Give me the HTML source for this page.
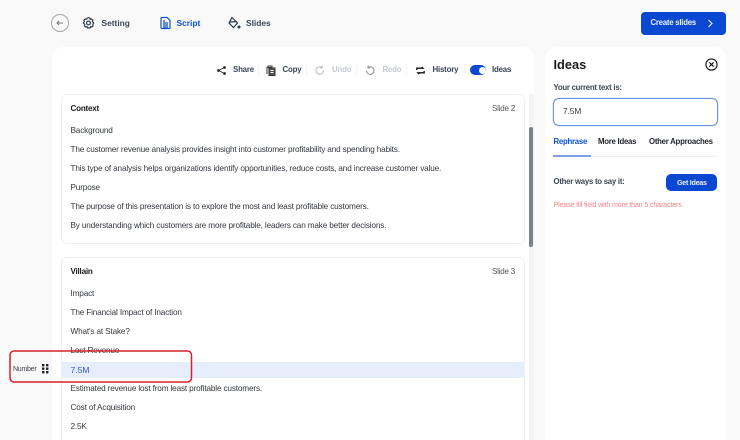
<!DOCTYPE html>
<html>
<head>
<meta charset="utf-8">
<style>
html,body{margin:0;padding:0;width:740px;height:440px;overflow:hidden}
body{position:relative;background:#f9f9fa;font-family:"Liberation Sans",sans-serif;color:#2f3640}
.a{position:absolute;white-space:nowrap;line-height:12px}
svg{position:absolute;overflow:visible}
.panel{position:absolute;background:#fff;border-radius:12px 12px 0 0}
.card{position:absolute;left:61px;width:462px;background:#fff;border:1px solid #f0f0f4;border-radius:6px;box-sizing:content-box}
.t{font-size:8.2px;letter-spacing:-.15px;color:#33373e}
.h{font-size:8.1px;letter-spacing:-.23px;font-weight:bold;color:#1a1a1a}
.s{font-size:8px;letter-spacing:-.2px;color:#555}
.tb{font-size:7.9px;letter-spacing:-.2px;font-weight:bold;color:#39465a}
.g{color:#c5c9d0}
.nav{font-size:8.4px;font-weight:bold;color:#3a4654}
.m{font-size:7.8px;letter-spacing:-.25px;font-weight:bold}
.d{position:absolute;top:64px;width:1px;height:12px;background:#f5f5f7}
</style>
</head>
<body>

<!-- top nav -->
<svg style="left:51px;top:14px" width="18" height="18" viewBox="0 0 18 18" fill="none"><circle cx="9" cy="9" r="8.500" stroke="#a0a3a8" stroke-width="1"/><path d="M12 9H6M8 7L6 9l2 2" stroke="#777" stroke-width="1"/></svg>
<svg style="left:82px;top:16px" width="13" height="14" viewBox="0 0 24 24" fill="none" stroke="#2f3b4a" stroke-width="2.200"><path d="M12 2l2.500 1 .8 2.300 2.400-.6 2.300 2.200-.7 2.500L21.500 12l-1.700 2.600.7 2.500-2.300 2.200-2.400-.6-.8 2.300h-5l-.8-2.300-2.400.6-2.300-2.200.7-2.500L2.500 12l1.700-2.600-.7-2.500 2.300-2.200 2.400.6L9.500 3z"/><circle cx="12" cy="12" r="3.500"/></svg>
<div class="a nav" style="left:101.500px;top:17px">Setting</div>
<svg style="left:160px;top:17px" width="11" height="12" viewBox="0 0 11 12" fill="none" stroke="#0b4fd6" stroke-width="1.200"><path d="M1 1.500a1 1 0 0 1 1-1h5l3 3v7a1 1 0 0 1-1 1H2a1 1 0 0 1-1-1z"/><path d="M3 6h5M3 8h5M3 10h5M3 4h2"/></svg>
<div class="a nav" style="left:176.500px;top:17px;color:#0b4fd6">Script</div>
<svg style="left:228px;top:16px" width="13" height="14" viewBox="0 0 13 14" fill="none" stroke="#2f3b4a" stroke-width="1.200"><path d="M4 1.500l5.500 5.500-4 4.500L1 7z"/><path d="M2 6l7-.5"/><circle cx="11" cy="11" r="1.500" fill="#2f3b4a" stroke="none"/></svg>
<div class="a nav" style="left:246px;top:17px">Slides</div>

<!-- create button -->
<div style="position:absolute;left:641px;top:12px;width:85px;height:23px;background:#0b48d2;border-radius:4px"></div>
<div class="a" style="left:650.500px;top:17px;font-size:7.800px;letter-spacing:-.24px;font-weight:bold;color:#e9f0ff">Create slides</div>
<svg style="left:707px;top:19px" width="7" height="9" viewBox="0 0 7 9" fill="none" stroke="#fff" stroke-width="1"><path d="M1.500 1l3.500 3.500L1.500 8"/></svg>

<!-- main panel -->
<div class="panel" style="left:52px;top:47px;width:482px;height:393px"></div>

<!-- toolbar -->
<svg style="left:217px;top:66px" width="9" height="9" viewBox="0 0 9 9" fill="#222" stroke="#222" stroke-width=".8"><path d="M7.500 1.500L1.500 4.500l6 3" fill="none"/><circle cx="1.500" cy="4.500" r="1"/><circle cx="7.500" cy="1.500" r="1"/><circle cx="7.500" cy="7.500" r="1"/></svg>
<div class="a tb" style="left:233px;top:64px">Share</div>
<svg style="left:266px;top:65px" width="10" height="11" viewBox="0 0 10 11" fill="none" stroke="#333" stroke-width="1"><path d="M1 2v7M2 1h4v1.500H2z"/><rect x="3" y="3" width="6" height="7.500" fill="#555"/><path d="M4.500 5.500h3M4.500 7.500h3" stroke="#fff"/></svg>
<div class="a tb" style="left:282.500px;top:64px">Copy</div>
<svg style="left:315px;top:65px" width="10" height="11" viewBox="0 0 10 11" fill="none" stroke="#b9bdc4" stroke-width="1"><path d="M8.500 5.500a3.800 3.800 0 1 1-1.500-3M7 .5v2.500H4.800"/></svg>
<div class="a tb g" style="left:332px;top:64px">Undo</div>
<svg style="left:365px;top:65px" width="10" height="11" viewBox="0 0 10 11" fill="none" stroke="#8f949b" stroke-width="1"><path d="M1.500 5.500a3.800 3.800 0 1 0 1.500-3M3 .5v2.500h2.200"/></svg>
<div class="a tb g" style="left:382.500px;top:64px">Redo</div>
<svg style="left:416px;top:66px" width="9" height="9" viewBox="0 0 9 9" fill="none" stroke="#111" stroke-width="1.300"><path d="M.8 4V2.200H7L5.800 1M8.200 5v1.800H2L3.200 8"/></svg>
<div class="a tb" style="left:432.500px;top:64px">History</div>
<div style="position:absolute;left:470px;top:65px;width:16px;height:10px;background:#0b48d2;border-radius:5px"></div>
<div style="position:absolute;left:478.500px;top:66.500px;width:7px;height:7px;background:#fff;border-radius:50%"></div>
<div class="a tb" style="left:492px;top:64px">Ideas</div>
<div class="d" style="left:258px"></div>
<div class="d" style="left:306px"></div>
<div class="d" style="left:356px"></div>
<div class="d" style="left:406px"></div>
<div class="d" style="left:464px"></div>

<!-- scrollbar -->
<div style="position:absolute;left:529px;top:94px;width:5px;height:346px;background:#f3f3f4"></div>
<div style="position:absolute;left:529px;top:127px;width:4px;height:120px;background:#7c8289;border-radius:2px"></div>

<!-- card 1 -->
<div class="card" style="top:94px;height:148px"></div>
<div class="a h" style="left:70.500px;top:103px">Context</div>
<div class="a s" style="right:225px;top:103px">Slide 2</div>
<div class="a t" style="left:70.500px;top:125px">Background</div>
<div class="a t" style="left:70.500px;top:144px">The customer revenue analysis provides insight into customer profitability and spending habits.</div>
<div class="a t" style="left:70.500px;top:163px">This type of analysis helps organizations identify opportunities, reduce costs, and increase customer value.</div>
<div class="a t" style="left:70.500px;top:182px">Purpose</div>
<div class="a t" style="left:70.500px;top:201px">The purpose of this presentation is to explore the most and least profitable customers.</div>
<div class="a t" style="left:70.500px;top:220px">By understanding which customers are more profitable, leaders can make better decisions.</div>

<!-- card 2 -->
<div class="card" style="top:257px;height:200px"></div>
<div class="a h" style="left:70.500px;top:266px">Villain</div>
<div class="a s" style="right:225px;top:266px">Slide 3</div>
<div class="a t" style="left:70.500px;top:288px">Impact</div>
<div class="a t" style="left:70.500px;top:307px">The Financial Impact of Inaction</div>
<div class="a t" style="left:70.500px;top:326px">What's at Stake?</div>
<div class="a t" style="left:70.500px;top:345px">Lost Revenue</div>
<div style="position:absolute;left:62px;top:362px;width:462px;height:16px;background:#e6edfb"></div>
<div class="a t" style="left:70.500px;top:364px;color:#2f55c8;font-size:8.500px;letter-spacing:0">7.5M</div>
<div class="a t" style="left:70.500px;top:383px">Estimated revenue lost from least profitable customers.</div>
<div class="a t" style="left:70.500px;top:402px">Cost of Acquisition</div>
<div class="a t" style="left:70.500px;top:421px">2.5K</div>

<!-- number handle and red box -->
<div class="a" style="left:13px;top:364px;font-size:7px;letter-spacing:-.25px;color:#3b3b45">Number</div>
<svg style="left:42px;top:364px" width="6.500" height="10" viewBox="0 0 6.500 10" fill="#222"><rect x="0" y="0" width="2.400" height="2.400"/><rect x="4" y="0" width="2.400" height="2.400"/><rect x="0" y="3.500" width="2.400" height="2.400"/><rect x="4" y="3.500" width="2.400" height="2.400"/><rect x="0" y="7" width="2.400" height="2.400"/><rect x="4" y="7" width="2.400" height="2.400"/></svg>
<svg style="left:0;top:0" width="740" height="440" fill="none"><rect x="10" y="351" width="181.500" height="31" rx="4" stroke="#d5202c" stroke-width="1.500"/></svg>

<!-- ideas panel -->
<div class="panel" style="left:545px;top:47px;width:181px;height:393px"></div>
<div class="a" style="left:553.500px;top:57px;font-size:12.800px;line-height:15px;font-weight:bold;color:#1b1b1f">Ideas</div>
<svg style="left:704.500px;top:58px" width="13" height="13" viewBox="0 0 13 13" fill="none" stroke="#111" stroke-width="1.100"><circle cx="6.500" cy="6.500" r="5.600"/><path d="M4.300 4.300l4.400 4.400M8.700 4.300l-4.400 4.400"/></svg>
<div class="a m" style="left:553.500px;top:82px;color:#3f4852">Your current text is:</div>
<div style="position:absolute;left:553px;top:98px;width:163px;height:26px;border:1px solid #6f94df;border-radius:6px;box-shadow:0 0 0 .5px #cfdcf5"></div>
<div class="a" style="left:563px;top:105px;font-size:8.400px;letter-spacing:-.1px;color:#3a3f46">7.5M</div>

<div class="a m" style="left:553.500px;top:136px;color:#0b4fd6">Rephrase</div>
<div class="a m" style="left:598px;top:136px;color:#22262c">More Ideas</div>
<div class="a m" style="left:649px;top:136px;color:#22262c">Other Approaches</div>
<div style="position:absolute;left:553px;top:156px;width:164px;height:1px;background:#eceef1"></div>
<div style="position:absolute;left:553px;top:155px;width:38px;height:1.500px;background:#7ea0e6"></div>

<div class="a m" style="left:553.500px;top:176px;color:#3f4852">Other ways to say it:</div>
<div style="position:absolute;left:666px;top:174px;width:51px;height:17px;background:#0b48d2;border-radius:5px"></div>
<div class="a" style="left:677px;top:176.500px;font-size:7.200px;letter-spacing:-.3px;font-weight:bold;color:#e9f0ff">Get Ideas</div>
<div class="a" style="left:553.500px;top:198.500px;font-size:7.100px;letter-spacing:-.15px;color:#f2848a">Please fill field with more than 5 characters</div>

</body>
</html>
